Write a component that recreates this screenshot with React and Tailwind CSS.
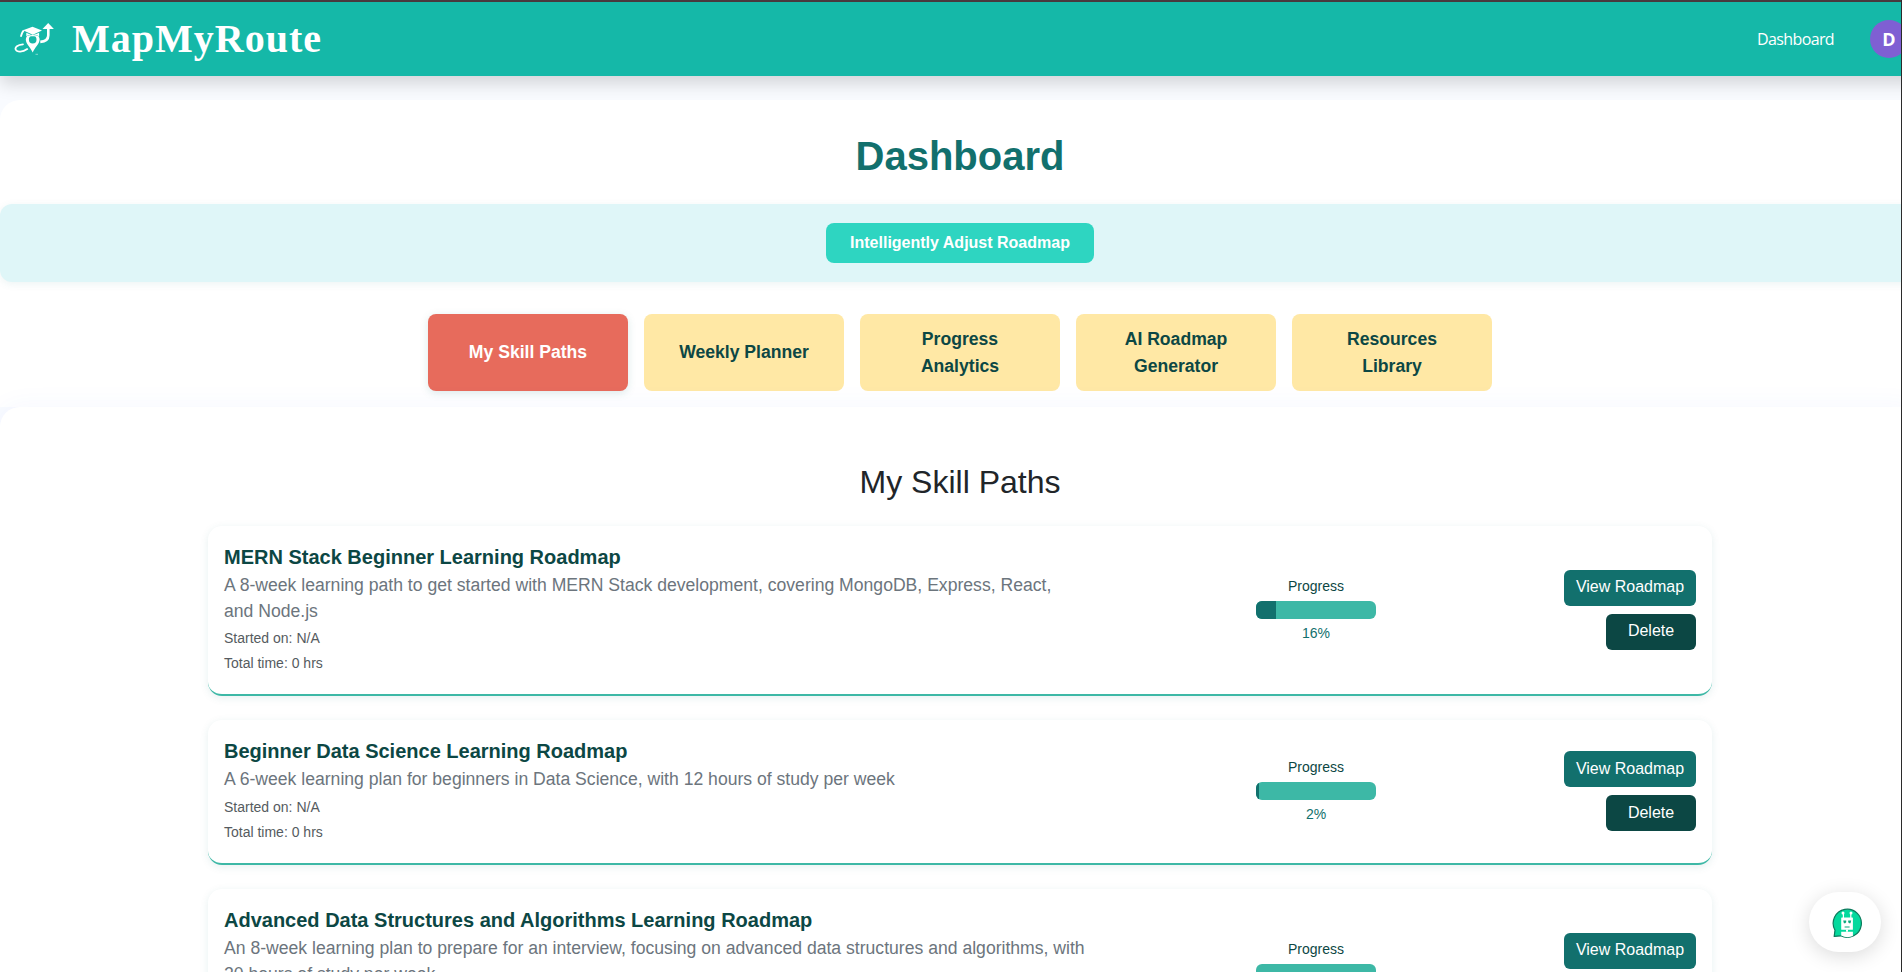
const cards = [
  {
    title: 'MERN Stack Beginner Learning Roadmap',
    lines: ['A 8-week learning path to get started with MERN Stack development, covering MongoDB, Express, React,', 'and Node.js'],
    progress: 16,
  },
  {
    title: 'Beginner Data Science Learning Roadmap',
    lines: ['A 6-week learning plan for beginners in Data Science, with 12 hours of study per week'],
    progress: 2,
  },
  {
    title: 'Advanced Data Structures and Algorithms Learning Roadmap',
    lines: ['An 8-week learning plan to prepare for an interview, focusing on advanced data structures and algorithms, with', '20 hours of study per week'],
    progress: 0,
  },
];

const tabs = ['My Skill Paths', 'Weekly Planner', 'Progress Analytics', 'AI Roadmap Generator', 'Resources Library'];

function Logo() {
  return (
    <svg className="h-8 w-10 shrink-0" viewBox="0 0 40 32" fill="none">
      <path d="M18.500 3.700 28 7.600 18.800 11.800 9 7.300Z" fill="#fff" />
      <path d="M12.300 9.800v3.400c3.800-1.800 9-1.800 12.800 0V9.800l-6.300 2.800Z" fill="#fff" />
      <path d="M9.800 7.600C8.300 8.600 7.800 10.500 6.800 13.800" stroke="#fff" strokeWidth="1.800" />
      <path
        d="M18.700 29.600c-2-5-6.900-8.600-6.900-13 0-1.400.5-2.600 1.200-3.600 3.400-1.500 8-1.500 11.400 0 .7 1 1.200 2.200 1.200 3.600 0 4.400-4.900 8-6.900 13Zm0-9.200a3.800 3.800 0 0 0 3.800-3.900c0-1.200-.5-2.200-1.200-2.900-1.700-.4-3.500-.4-5.200 0-.7.7-1.200 1.700-1.200 2.900a3.800 3.800 0 0 0 3.800 3.900Z"
        fill="#fff"
        fillRule="evenodd"
      />
      <path d="M26.300 18.900c5.200-.3 8-2.400 8-6.600V5" stroke="#fff" strokeWidth="2.600" />
      <path d="M34.200 0 39.900 6H28.500Z" fill="#fff" />
      <path d="M9 21.300C3.500 21.800.7 24 1.700 26.500c1.300 3 7 2.900 11.500-.4" stroke="#fff" strokeWidth="1.800" strokeLinecap="round" />
      <path d="M21.500 31.300h2.500" stroke="#fff" strokeOpacity="0.600" strokeWidth="0.800" />
    </svg>
  );
}

function Robot() {
  return (
    <svg className="h-[31px] w-[31px]" viewBox="0 0 31 31">
      <path d="M2.200 28.400 3 22.200A14.100 14.100 0 1 1 8.800 27.800Z" fill="#04d99d" stroke="#0b7a5c" strokeWidth="1.200" strokeLinejoin="round" />
      <path d="M11.400 5v5M18.800 5v5" stroke="#fff" strokeWidth="1.200" />
      <circle cx="11" cy="5" r="1.500" fill="#fff" />
      <circle cx="19" cy="5" r="1.500" fill="#fff" />
      <rect x="9.200" y="9.500" width="11.700" height="12.300" rx="0.600" fill="#fff" />
      <path d="M11.200 12.600h3v1.600l-1 1h-1.300ZM16.200 12.600h3l-.7 2.600h-1.300l-1-1ZM12.600 18.400h5v1h-5Z" fill="#0aa87c" />
      <path d="M14 21.500h2v2.200h-2Z" fill="#fff" />
      <path d="M9.200 23.700h11.700v4.400a14 14 0 0 1-11.700-.5Z" fill="#fff" />
    </svg>
  );
}

function Card({ title, lines, progress }) {
  return (
    <div className="flex items-center rounded-[14px] border-b-2 border-[#3db8a6] bg-white p-4 shadow-[0_2px_8px_rgba(19,112,110,0.10)]">
      <div className="w-[883px] shrink-0">
        <h3 className="text-[20px] leading-[30px] font-bold text-[#0c4744]">{title}</h3>
        <div className="min-h-[27.6px] text-[17.6px] leading-[26px] whitespace-nowrap text-[#6c757d]">
          {lines.map((l) => (
            <div key={l}>{l}</div>
          ))}
        </div>
        <div className="pt-[1.5px] pb-[2.25px] text-[14px] leading-[25px] text-[#555b60]">
          <p>Started on: N/A</p>
          <p>Total time: 0 hrs</p>
        </div>
      </div>
      <div className="flex flex-1 flex-col items-center pr-[39px]">
        <span className="text-[14px] leading-[21px] text-[#0c4744]">Progress</span>
        <div className="my-1 h-[18px] w-[120px] overflow-hidden rounded-md bg-[#3db8a6]">
          <div className="h-full bg-[#12706d]" style={{ width: Math.ceil(progress * 1.2) }} />
        </div>
        <span className="text-[14px] leading-[21px] text-[#12706d]">{progress}%</span>
      </div>
      <div className="flex shrink-0 flex-col items-end gap-2 text-[16px] text-white">
        <button className="h-9 w-[132px] rounded-md bg-[#12706d] pb-px">View Roadmap</button>
        <button className="h-9 w-[90px] rounded-md bg-[#0c4744] pb-px">Delete</button>
      </div>
    </div>
  );
}

export default function App() {
  return (
    <div className="relative h-[972px] w-[1902px] overflow-hidden bg-[#f9fbff] font-['Liberation_Sans',Arial,sans-serif]">
      <div className="w-[1920px]">
        <div className="h-[2px] bg-[#4b3a3f]" />
        <header className="relative z-0 flex h-[74px] items-center bg-[#15b8a8] pl-[14px] text-white shadow-[0_8px_16px_rgba(0,0,0,0.15)]">
          <Logo />
          <span className="ml-[18px] font-['Liberation_Serif','Times_New_Roman',serif] text-[40px] leading-[60px] font-bold tracking-[1px]">MapMyRoute</span>
          <span className="mr-[36px] ml-auto font-['Open_Sans','Noto_Sans',sans-serif] text-[16px] tracking-[-0.62px]">Dashboard</span>
          <div className="mr-[12px] flex h-[38px] w-[38px] items-center justify-center rounded-full bg-[#7f5fd3] font-['Open_Sans','Noto_Sans',sans-serif] text-[18px] font-bold">D</div>
        </header>

        <section className="relative z-10 mt-6 h-[307px] rounded-t-[20px] bg-white pt-[26px]">
          <h1 className="text-center text-[40px] leading-[60px] font-bold text-[#12706d]">Dashboard</h1>
          <div className="mt-[18px] flex h-[78px] items-center justify-center rounded-xl bg-[#dff6f8] shadow-[0_2px_8px_rgba(19,112,110,0.08)]">
            <button className="h-10 w-[268px] rounded-lg bg-[#2ed5c1] pb-px text-[16px] font-bold text-white">Intelligently Adjust Roadmap</button>
          </div>
          <nav className="mt-8 flex justify-center gap-4">
            {tabs.map((t, i) => (
              <button
                key={t}
                className={
                  i === 0
                    ? 'h-[77px] w-[200px] rounded-lg bg-[#e76b5c] px-8 text-[17.6px] leading-[26.4px] font-bold text-white shadow-[0_2px_8px_rgba(19,112,110,0.15)]'
                    : 'h-[77px] w-[200px] rounded-lg bg-[#ffe8a5] px-8 text-[17.6px] leading-[26.4px] font-bold text-[#0c4744]'
                }
              >
                {t}
              </button>
            ))}
          </nav>
        </section>

        <section className="relative z-20 h-[700px] rounded-t-[20px] bg-white px-[208px] pt-[51px] shadow-[0_0_28px_rgba(60,90,255,0.05)]">
          <h2 className="text-center text-[32px] leading-[48px] text-[#212529]">My Skill Paths</h2>
          <div className="mt-5 flex flex-col gap-6">
            {cards.map((c) => (
              <Card key={c.title} {...c} />
            ))}
          </div>
        </section>
      </div>

      <div className="absolute top-[892px] left-[1809px] z-30 flex h-[60px] w-[72px] items-center justify-center rounded-[30px] bg-white pt-[2px] pl-[4px] shadow-[0_4px_20px_rgba(0,0,0,0.14)]">
        <Robot />
      </div>
      <div className="absolute top-0 right-0 z-40 h-full w-px bg-[#2b2b2b]" />
    </div>
  );
}
